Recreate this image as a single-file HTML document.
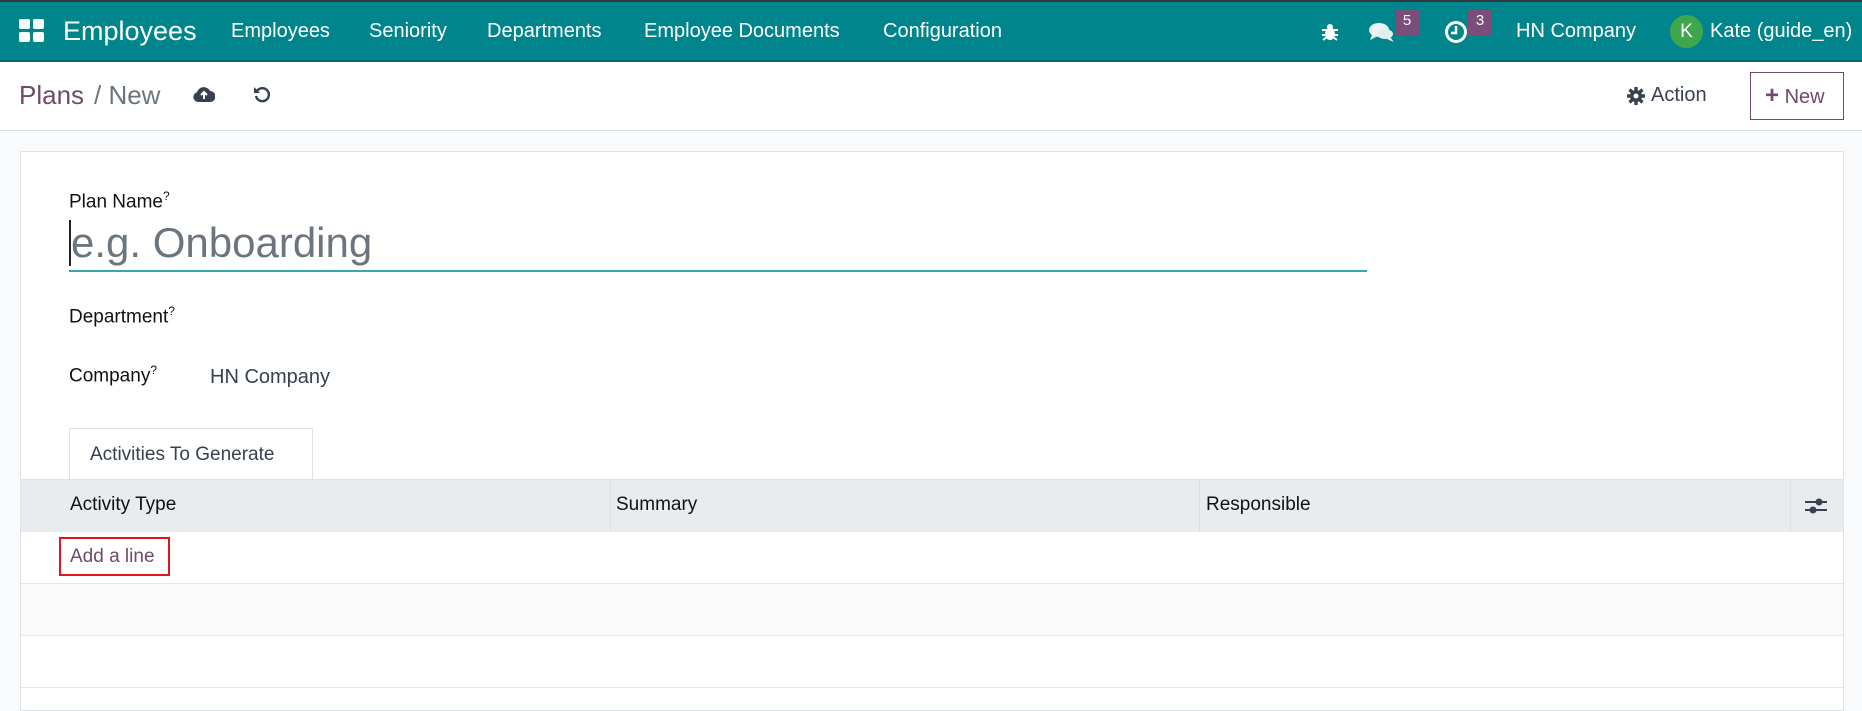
<!DOCTYPE html>
<html><head><meta charset="utf-8"><style>
*{box-sizing:border-box;margin:0;padding:0}
body{width:1862px;height:689px;overflow:hidden;font-family:"Liberation Sans",sans-serif;background:#f9fafb;color:#212529;position:relative}
.a{position:absolute;white-space:nowrap}
.nav{position:absolute;left:0;top:0;width:1862px;height:62px;background:#01858d;border-top:2px solid #2f3b40;border-bottom:2px solid #016a70}
.nav .a{color:#fff;font-size:20px;top:18px}
.badge{position:absolute;background:#7b4d7a;color:#fff;font-size:15px;width:24px;height:26px;text-align:center;line-height:22px;border-radius:2px}
.cp{position:absolute;left:0;top:62px;width:1862px;height:69px;background:#fff;border-bottom:1px solid #dee2e6}
.card{position:absolute;left:20px;top:151px;width:1824px;height:560px;background:#fff;border:1px solid #dee2e6}
.lbl{font-size:19px;color:#111}
.lbl sup{font-size:12px}
</style></head><body>
<div class="nav">
 <svg class="a" style="left:19px;top:17px" width="26" height="24" viewBox="0 0 26 24"><rect x="0" y="0" width="11" height="10" rx="2" fill="#fff"/><rect x="14" y="0" width="11" height="10" rx="2" fill="#fff"/><rect x="0" y="13" width="11" height="10" rx="2" fill="#fff"/><rect x="14" y="13" width="11" height="10" rx="2" fill="#fff"/></svg>
 <div class="a" style="left:63px;top:14px;font-size:27px">Employees</div>
 <div class="a" style="left:231px">Employees</div>
 <div class="a" style="left:369px">Seniority</div>
 <div class="a" style="left:487px">Departments</div>
 <div class="a" style="left:644px">Employee Documents</div>
 <div class="a" style="left:883px">Configuration</div>
 <svg class="a" style="left:1320px;top:20px" width="20" height="20" viewBox="0 0 20 20" fill="#fff"><ellipse cx="10" cy="12" rx="5" ry="6"/><circle cx="10" cy="5" r="3"/><path d="M2 8h16M2 13h16M3 18l4-3M17 18l-4-3" stroke="#fff" stroke-width="2"/></svg>
 <svg class="a" style="left:1368px;top:18px" width="28" height="24" viewBox="0 0 28 24" fill="#e8f4f5"><ellipse cx="11" cy="10" rx="10" ry="7"/><path d="M4 15l-2 5 6-3z"/><ellipse cx="17" cy="14" rx="8" ry="5" fill="#dfeff0"/><path d="M22 17l4 5-7-3z"/></svg>
 <div class="badge" style="left:1395px;top:8px">5</div>
 <svg class="a" style="left:1444px;top:18px" width="24" height="24" viewBox="0 0 24 24"><circle cx="12" cy="12" r="9.5" fill="none" stroke="#fff" stroke-width="3"/><path d="M12 6v7h-5" stroke="#fff" stroke-width="2.5" fill="none"/></svg>
 <div class="badge" style="left:1468px;top:8px">3</div>
 <div class="a" style="left:1516px">HN Company</div>
 <div class="a" style="left:1670px;top:13px;width:33px;height:33px;border-radius:50%;background:#3fa74b;text-align:center;line-height:33px;font-size:19px">K</div>
 <div class="a" style="left:1710px">Kate (guide_en)</div>
</div>
<div class="cp">
 <div class="a" style="left:19px;top:18px;font-size:26px;color:#71496b">Plans</div>
 <div class="a" style="left:94px;top:18px;font-size:26px;color:#6c757d">/ New</div>
 <svg class="a" style="left:193px;top:23px" width="22" height="18" viewBox="0 0 22 18"><path d="M5 17a5 5 0 0 1-1-9.8A7 7 0 0 1 17 6a5.5 5.5 0 0 1 0 11z" fill="#374151"/><path d="M11 14V8M8 10l3-3 3 3" stroke="#fff" stroke-width="2" fill="none"/></svg>
 <svg class="a" style="left:253px;top:23px" width="18" height="18" viewBox="0 0 18 18"><path d="M4 6A6.5 6.5 0 1 1 3 11" stroke="#374151" stroke-width="2.4" fill="none"/><path d="M1 2v6h6z" fill="#374151"/></svg>
 <svg class="a" style="left:1627px;top:25px" width="18" height="18" viewBox="0 0 18 18"><circle cx="9" cy="9" r="6" fill="#374151"/><g stroke="#374151" stroke-width="3.4"><path d="M9 0v18M0 9h18M2.6 2.6l12.8 12.8M15.4 2.6L2.6 15.4"/></g><circle cx="9" cy="9" r="2.5" fill="#fff"/></svg>
 <div class="a" style="left:1651px;top:22px;font-size:20px;color:#374151">Action</div>
 <div class="a" style="left:1750px;top:10px;width:94px;height:48px;border:1px solid #71496b;color:#71496b;font-size:20px;line-height:46px;padding-left:14px"><b style="font-size:24px">+</b> New</div>
</div>
<div class="card">
 <div class="a lbl" style="left:48px;top:37px">Plan Name<sup>?</sup></div>
 <div class="a" style="left:48px;top:68px;font-size:42px;color:#6c757d;border-left:2px solid #222;line-height:1.1">e.g. Onboarding</div>
 <div class="a" style="left:48px;top:118px;width:1298px;border-top:2px solid #3aa6a9"></div>
 <div class="a lbl" style="left:48px;top:152px">Department<sup>?</sup></div>
 <div class="a lbl" style="left:48px;top:211px">Company<sup>?</sup></div>
 <div class="a" style="left:189px;top:214px;font-size:20px;color:#374151">HN Company</div>
 <div class="a" style="left:48px;top:276px;width:244px;height:53px;border:1px solid #dee2e6;border-bottom:none;background:#fff;font-size:19px;color:#374151;padding:15px 0 0 20px">Activities To Generate</div>
 <div class="a" style="left:0;top:327px;width:1822px;height:53px;background:#e9ecef;border-top:1px solid #dee2e6"></div>
 <div class="a" style="left:589px;top:328px;height:52px;border-left:1px solid #dde0e3"></div>
 <div class="a" style="left:1178px;top:328px;height:52px;border-left:1px solid #dde0e3"></div>
 <div class="a" style="left:1769px;top:328px;height:52px;border-left:1px solid #dde0e3"></div>
 <div class="a lbl" style="left:49px;top:342px">Activity Type</div>
 <div class="a lbl" style="left:595px;top:342px">Summary</div>
 <div class="a lbl" style="left:1185px;top:342px">Responsible</div>
 <svg class="a" style="left:1783px;top:344px" width="24" height="20" viewBox="0 0 24 20"><path d="M1 6h22M1 14h22" stroke="#374151" stroke-width="2"/><circle cx="15" cy="6" r="3.5" fill="#374151"/><circle cx="9" cy="14" r="3.5" fill="#374151"/></svg>
 <div class="a" style="left:0;top:380px;width:1822px;height:52px;border-bottom:1px solid #e4e6e8"></div>
 <div class="a" style="left:38px;top:385px;width:111px;height:39px;border:2px solid #e3141c"></div>
 <div class="a" style="left:49px;top:394px;font-size:19px;color:#71496b">Add a line</div>
 <div class="a" style="left:0;top:432px;width:1822px;height:52px;background:#fafafa;border-bottom:1px solid #e4e6e8"></div>
 <div class="a" style="left:0;top:484px;width:1822px;height:52px;background:#fff;border-bottom:1px solid #e4e6e8"></div>
</div>
</body></html>
